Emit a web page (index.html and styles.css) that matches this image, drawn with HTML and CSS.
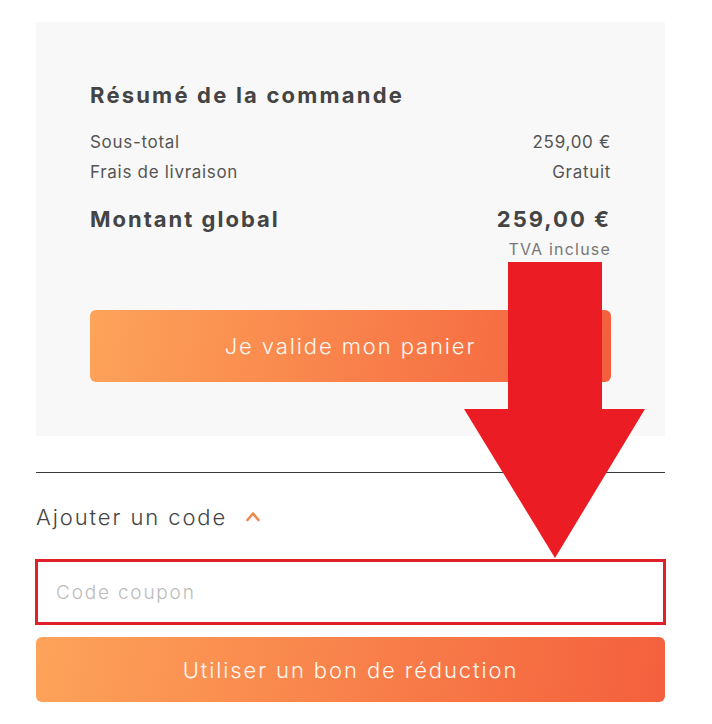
FILE: index.html
```html
<!DOCTYPE html>
<html lang="fr">
<head>
<meta charset="utf-8">
<title>Panier</title>
<link rel="stylesheet" href="styles.css">
</head>
<body>
<div class="page">
  <section class="summary">
    <h2 class="title">Résumé de la commande</h2>
    <div class="row"><span>Sous-total</span><span>259,00 €</span></div>
    <div class="row"><span>Frais de livraison</span><span>Gratuit</span></div>
    <div class="row total"><span>Montant global</span><span>259,00 €</span></div>
    <div class="tva">TVA incluse</div>
    <button class="btn btn-validate">Je valide mon panier</button>
  </section>
  <hr class="sep">
  <div class="coupon-toggle">
    <span>Ajouter un code</span>
    <svg class="caret" width="16" height="12" viewBox="0 0 16 12"><path d="M2.5 10 L8 3.5 L13.5 10" fill="none" stroke="#f2874c" stroke-width="2.6" stroke-linecap="round" stroke-linejoin="round"/></svg>
  </div>
  <input class="coupon-input" type="text" placeholder="Code coupon">
  <button class="btn btn-coupon">Utiliser un bon de réduction</button>
  <svg class="arrow" width="190" height="300" viewBox="0 0 190 300"><polygon points="44,0 138,0 138,147 181,147 91,296 0,147 44,147" fill="#ec1c24"/></svg>
</div>
</body>
</html>
```
FILE: styles.css
```css
* { box-sizing: border-box; }
html, body { margin: 0; padding: 0; background: #fff; }
body { font-family: Inter, "Open Sans", sans-serif; color: #444; }
.page { position: relative; width: 629px; margin-left: 36px; padding-top: 22px; }
.summary { background: #f8f8f8; padding: 58px 54px 54px; }
.title { margin: 0 0 17px; font-size: 22px; line-height: 30px; font-weight: 700; color: #444; letter-spacing: 2.2px; }
.row { display: flex; justify-content: space-between; font-size: 17px; line-height: 30px; color: #555; font-weight: 400; letter-spacing: 0.7px; }
.row.total { margin-top: 17px; font-size: 22px; font-weight: 700; color: #444; letter-spacing: 2px; }
.tva { text-align: right; font-size: 16px; line-height: 30px; color: #777; letter-spacing: 1.2px; }
.btn { display: block; width: 100%; border: 0; border-radius: 6px; color: #fff8f0; font-family: inherit; font-size: 22px; font-weight: 300; letter-spacing: 1.9px; background: linear-gradient(100deg, #fda35a 0%, #fa8c4f 35%, #f45f3d 100%); cursor: pointer; }
.btn-validate { margin-top: 46px; height: 72px; }
.sep { margin: 36px 0 0; border: 0; border-top: 1px solid #3a3a3a; height: 0; }
.coupon-toggle { display: flex; align-items: center; gap: 18px; margin-top: 29px; font-size: 22px; line-height: 30px; font-weight: 300; color: #444; letter-spacing: 1.9px; }
.caret { display: block; margin-top: -2px; }
.coupon-input { display: block; width: calc(100% + 2px); margin: 27px 0 0 -1px; height: 66px; border: 3px solid #e0202a; padding: 0 18px; font-family: inherit; font-size: 19px; font-weight: 300; letter-spacing: 1.8px; color: #444; background: #fff; outline: none; }
.coupon-input::placeholder { color: #bbb; }
.btn-coupon { margin-top: 12px; height: 65px; }
.arrow { position: absolute; left: 428px; top: 262px; }
```
